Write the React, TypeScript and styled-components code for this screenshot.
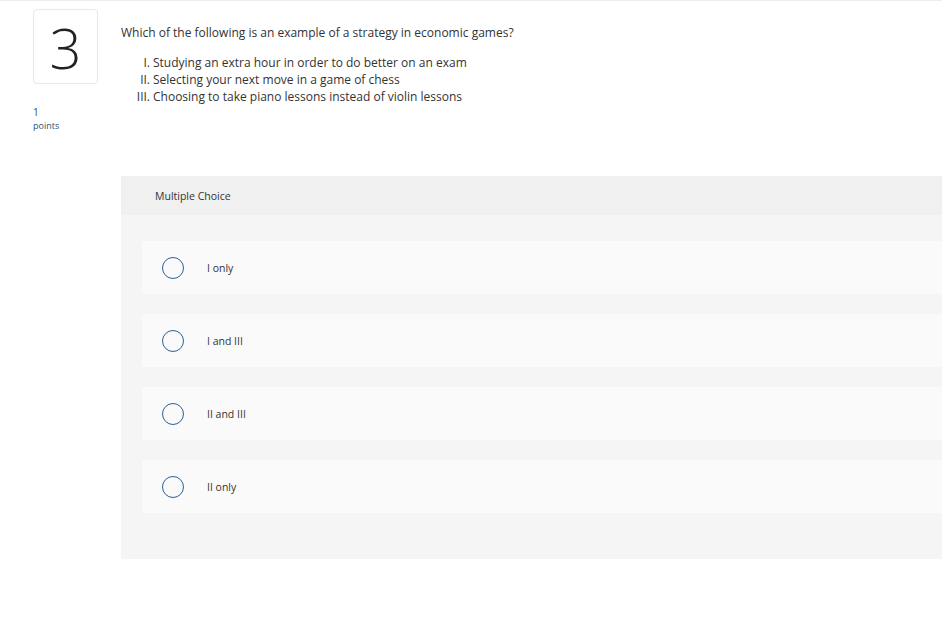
import React from 'react';
import styled, { createGlobalStyle } from 'styled-components';

const options = ['I only', 'I and III', 'II and III', 'II only'];
const statements = [
  { num: 'I.', text: 'Studying an extra hour in order to do better on an exam' },
  { num: 'II.', text: 'Selecting your next move in a game of chess' },
  { num: 'III.', text: 'Choosing to take piano lessons instead of violin lessons' },
];

function App() {
  return (
    <>
      <GlobalStyle />
      <Page>
        <Side>
          <NumberBox>3</NumberBox>
          <Points>
            <span>1</span>
            <small>points</small>
          </Points>
        </Side>

        <Main>
          <Question>Which of the following is an example of a strategy in economic games?</Question>
          <Statements>
            {statements.map((s) => (
              <Statement key={s.num}>
                <Num>{s.num}</Num>
                <span>{s.text}</span>
              </Statement>
            ))}
          </Statements>

          <Panel>
            <PanelHeader>Multiple Choice</PanelHeader>
            <Choices>
              {options.map((o) => (
                <Choice key={o}>
                  <Radio />
                  <ChoiceLabel>{o}</ChoiceLabel>
                </Choice>
              ))}
            </Choices>
          </Panel>
        </Main>
      </Page>
    </>
  );
}

export default App;

const GlobalStyle = createGlobalStyle`
  html, body {
    margin: 0;
    background: #fff;
    font-family: 'Open Sans', 'Liberation Sans', sans-serif;
    color: #333;
  }
`;

const Page = styled.div`
  display: flex;
  border-top: 1px solid #ececec;
  height: 636px;
  overflow: hidden;
`;

const Side = styled.div`
  display: flex;
  flex-direction: column;
  width: 88px;
  flex-shrink: 0;
  padding: 8px 0 0 33px;
`;

const NumberBox = styled.div`
  display: grid;
  place-content: center;
  width: 63px;
  height: 73px;
  border: 1px solid #e8e8e8;
  border-radius: 4px;
  font-size: 56px;
  font-weight: 300;
  color: #222;
  line-height: 1;
`;

const Points = styled.div`
  display: flex;
  flex-direction: column;
  margin-top: 21px;
  color: #2c4f75;

  span {
    font-size: 10px;
    line-height: 14px;
  }

  small {
    font-size: 9px;
    line-height: 14px;
  }
`;

const Main = styled.div`
  flex: 1;
  display: flex;
  flex-direction: column;
  min-width: 0;
`;

const Question = styled.p`
  margin: 24px 0 0;
  font-size: 12px;
  line-height: 16px;
  color: #333;
`;

const Statements = styled.div`
  display: flex;
  flex-direction: column;
  margin-top: 13px;
`;

const Statement = styled.div`
  display: flex;
  font-size: 12px;
  line-height: 17px;
  color: #333;
`;

const Num = styled.span`
  width: 29px;
  text-align: right;
  margin-right: 3px;
`;

const Panel = styled.div`
  margin-top: 71px;
  background: #f5f5f5;
  border-radius: 2px 0 0 2px;
  height: 383px;
`;

const PanelHeader = styled.div`
  background: #f0f0f0;
  height: 39px;
  display: flex;
  align-items: center;
  padding-left: 34px;
  font-size: 10.5px;
  color: #333;
`;

const Choices = styled.div`
  display: flex;
  flex-direction: column;
  gap: 20px;
  padding: 26px 0 0 21px;
`;

const Choice = styled.div`
  display: flex;
  align-items: center;
  height: 53px;
  background: #fafafa;
  border-radius: 2px 0 0 2px;
  padding-left: 20px;
`;

const Radio = styled.span`
  width: 20px;
  height: 20px;
  border: 1.5px solid #2d6096;
  border-radius: 50%;
  flex-shrink: 0;
`;

const ChoiceLabel = styled.span`
  margin-left: 23px;
  font-size: 10.5px;
  color: #333;
`;
